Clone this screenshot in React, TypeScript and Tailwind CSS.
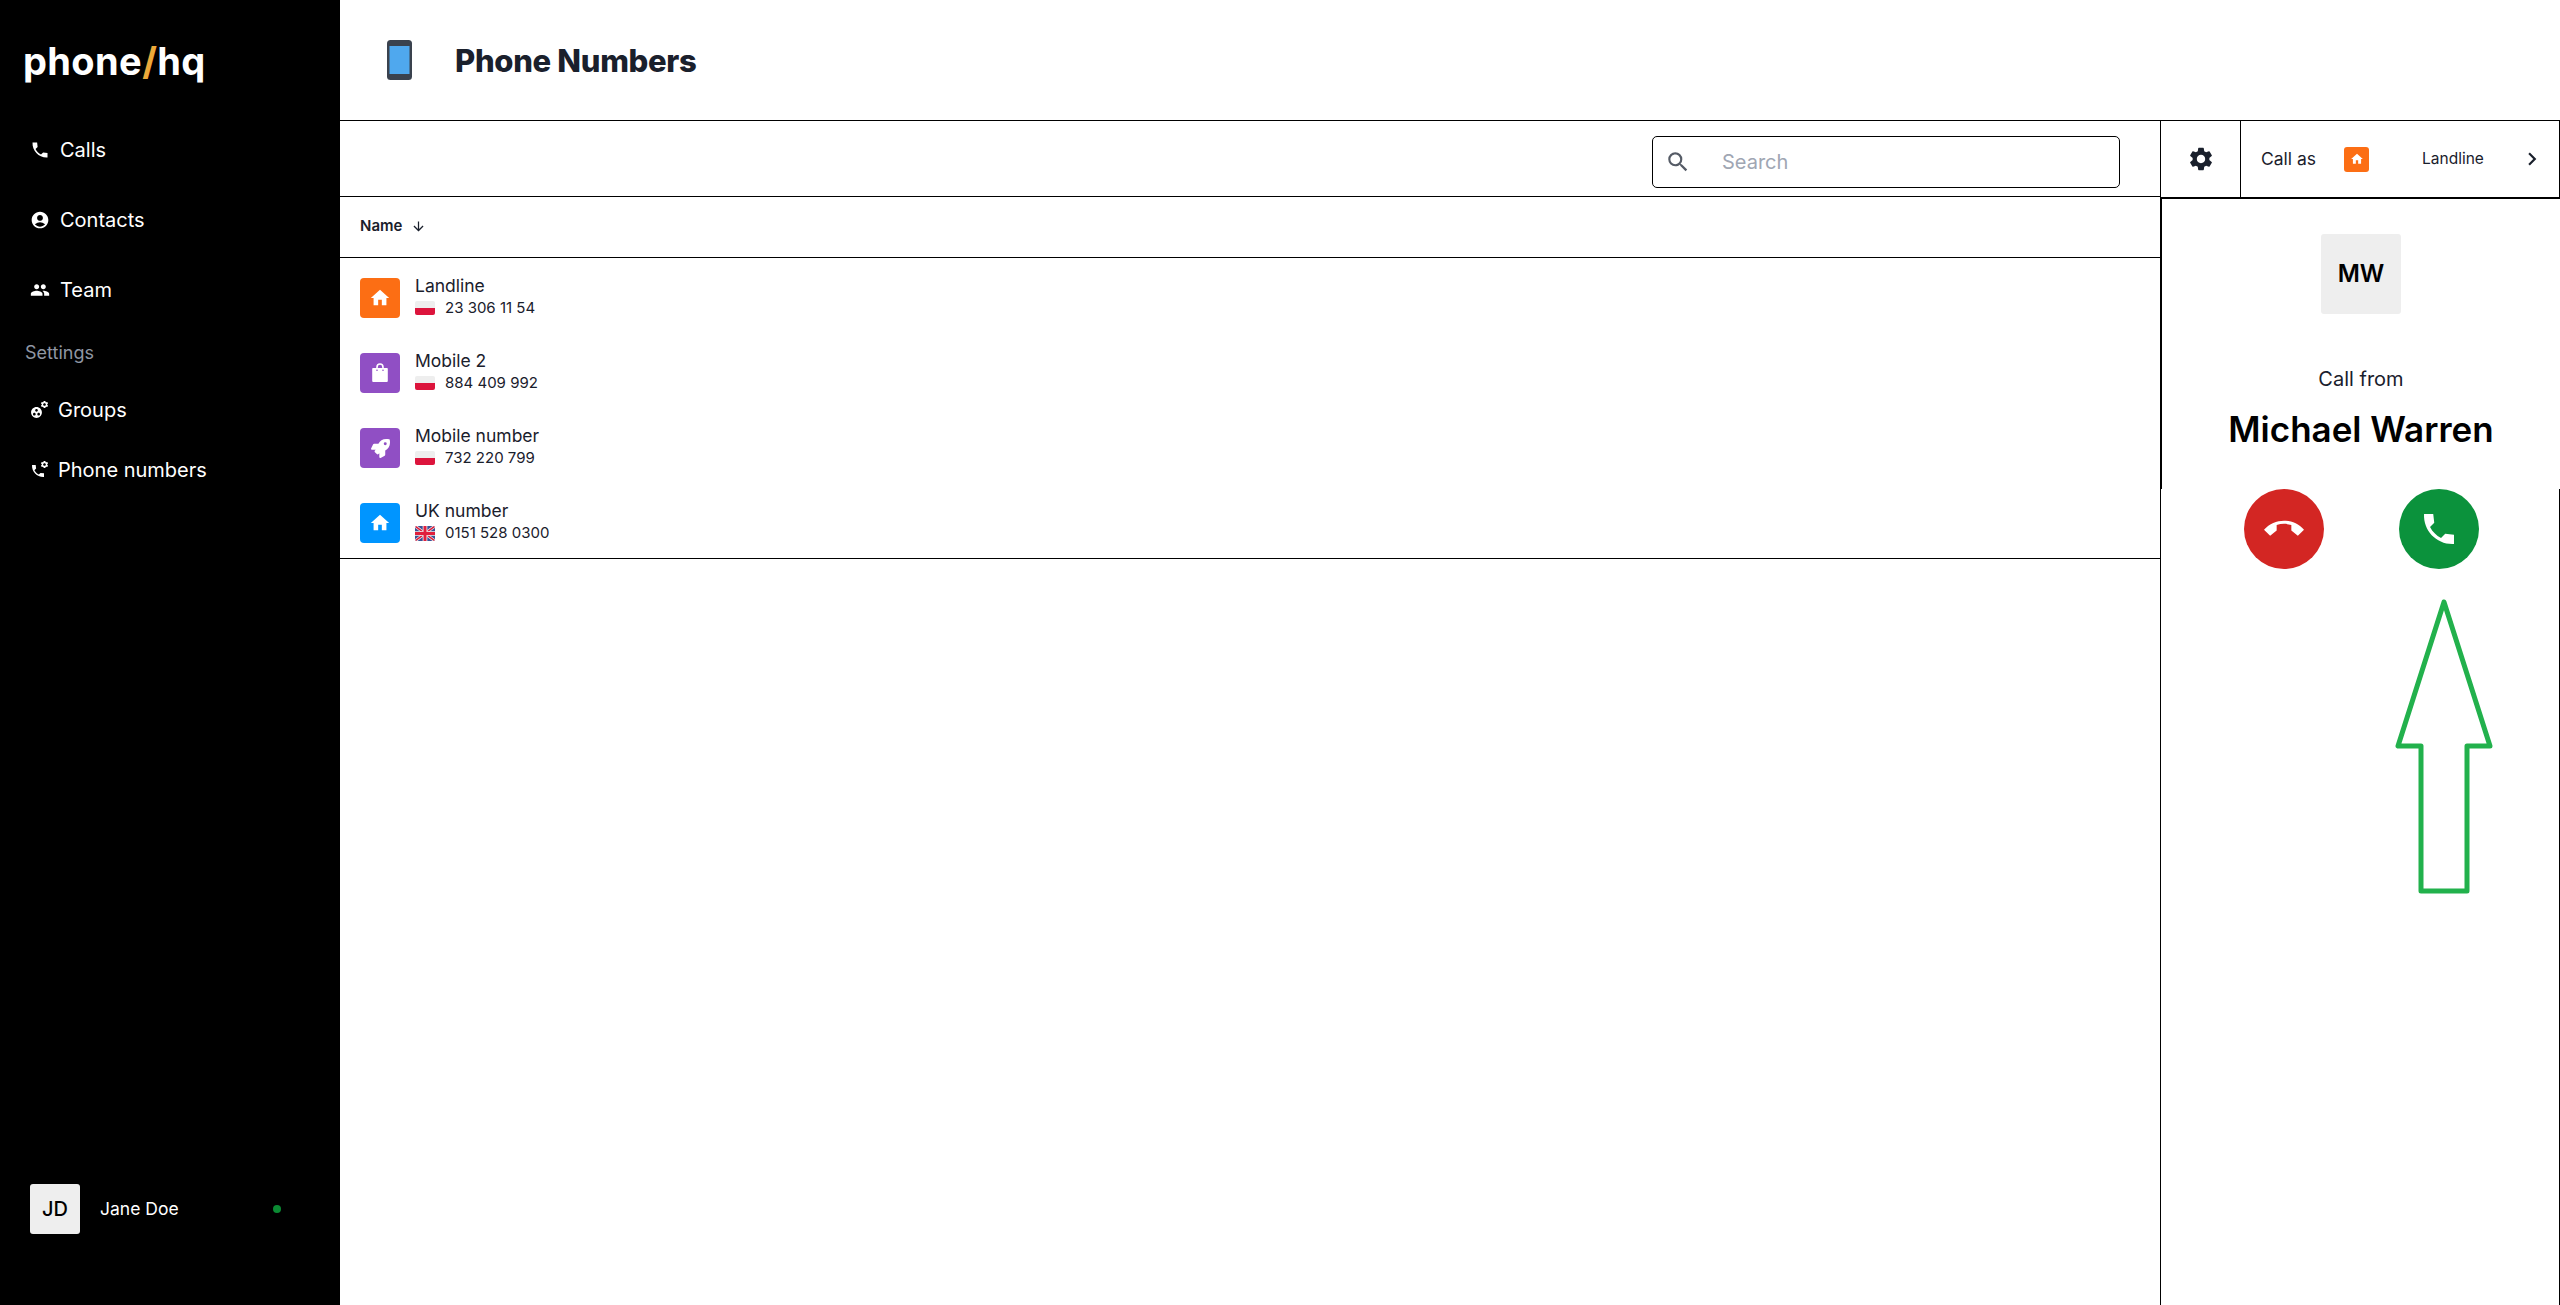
import React from "react";
import { MdAccountCircle, MdPeople, MdHome, MdSettings, MdSearch, MdChevronRight, MdArrowDownward } from "react-icons/md";
import { FaRocket } from "react-icons/fa";

const CALL = "M21 15.46l-5.27-.61-2.52 2.52c-2.83-1.44-5.15-3.75-6.59-6.59l2.53-2.53L8.54 3H3.03C2.45 13.18 10.82 21.55 21 20.97v-5.51z";
const CALL_END = "M3.68 16.07l3.92-3.11V9.59c2.85-.93 5.94-.93 8.8 0v3.38l3.91 3.1L24 12.39c-6.41-7.19-17.59-7.19-24 0l3.68 3.68z";
const GEAR = "M19.14 12.94c.04-.3.06-.61.06-.94 0-.32-.02-.64-.07-.94l2.03-1.58c.18-.14.23-.41.12-.61l-1.92-3.32c-.12-.22-.37-.29-.59-.22l-2.39.96c-.5-.38-1.03-.7-1.62-.94l-.36-2.54c-.04-.24-.24-.41-.48-.41h-3.84c-.24 0-.43.17-.47.41l-.36 2.54c-.59.24-1.13.57-1.62.94l-2.39-.96c-.22-.08-.47 0-.59.22L2.74 8.87c-.12.21-.08.47.12.61l2.03 1.58c-.05.3-.09.63-.09.94s.02.64.07.94l-2.03 1.58c-.18.14-.23.41-.12.61l1.92 3.32c.12.22.37.29.59.22l2.39-.96c.5.38 1.03.7 1.62.94l.36 2.54c.05.24.24.41.48.41h3.84c.24 0 .44-.17.47-.41l.36-2.54c.59-.24 1.13-.56 1.62-.94l2.39.96c.22.08.47 0 .59-.22l1.92-3.32c.12-.22.07-.47-.12-.61l-2.01-1.58zM12 15.6c-1.98 0-3.6-1.62-3.6-3.6s1.62-3.6 3.6-3.6 3.6 1.62 3.6 3.6-1.62 3.6-3.6 3.6z";
const WORK = "M12 2C6.48 2 2 6.48 2 12s4.48 10 10 10 10-4.48 10-10S17.52 2 12 2zM8 17.5c-1.38 0-2.5-1.12-2.5-2.5s1.12-2.5 2.5-2.5 2.5 1.12 2.5 2.5-1.12 2.5-2.5 2.5zM9.5 8c0-1.38 1.12-2.5 2.5-2.5s2.5 1.12 2.5 2.5-1.12 2.5-2.5 2.5S9.5 9.38 9.5 8zm6.5 9.5c-1.38 0-2.5-1.12-2.5-2.5s1.12-2.5 2.5-2.5 2.5 1.12 2.5 2.5-1.12 2.5-2.5 2.5z";

function Svg({ d, size, className }: { d: string; size: number; className?: string }) {
  return (
    <svg width={size} height={size} viewBox="0 0 24 24" fill="currentColor" className={className}>
      <path d={d} />
    </svg>
  );
}

function GroupsIcon() {
  return (
    <svg width="20" height="20" viewBox="0 0 20 20" fill="currentColor">
      <svg x="0" y="6" width="13" height="13" viewBox="0 0 24 24"><path d={WORK} /></svg>
      <svg x="10" y="0" width="9" height="9" viewBox="0 0 24 24"><path d={GEAR} /></svg>
    </svg>
  );
}

function PhoneGearIcon() {
  return (
    <svg width="20" height="20" viewBox="0 0 20 20" fill="currentColor">
      <svg x="0" y="3" width="16" height="16" viewBox="0 0 24 24"><path d={CALL} /></svg>
      <svg x="10" y="0" width="9" height="9" viewBox="0 0 24 24"><path d={GEAR} /></svg>
    </svg>
  );
}

function BagIcon() {
  return (
    <svg width="16" height="20" viewBox="0 0 16 20" fill="none">
      <path d="M5 6V4.2C5 2.4 6.3 1 8 1s3 1.4 3 3.2V6" stroke="#ffffff" strokeWidth="1.6" />
      <path d="M1 5h14a.8.8 0 0 1 .8.8V18a1 1 0 0 1-1 1H1.2a1 1 0 0 1-1-1V5.8A.8.8 0 0 1 1 5z" fill="#ffffff" />
      <circle cx="5" cy="7.2" r=".8" fill="#904fc4" />
      <circle cx="11" cy="7.2" r=".8" fill="#904fc4" />
    </svg>
  );
}

function PolandFlag() {
  return (
    <div className="flex h-[14px] w-5 flex-col overflow-hidden rounded-[2px]">
      <div className="flex-1 bg-[#eeeeee]" />
      <div className="flex-1 bg-[#dc143c]" />
    </div>
  );
}

function UkFlag() {
  return (
    <svg width="20" height="15" viewBox="0 0 60 45" className="rounded-[2px]">
      <rect width="60" height="45" fill="#3a4f95" />
      <path d="M0 0L60 45M60 0L0 45" stroke="#eeeeee" strokeWidth="9" />
      <path d="M0 0L60 45M60 0L0 45" stroke="#e01f3d" strokeWidth="4.5" />
      <path d="M30 0V45M0 22.5H60" stroke="#eeeeee" strokeWidth="14" />
      <path d="M30 0V45M0 22.5H60" stroke="#e01f3d" strokeWidth="9" />
    </svg>
  );
}

function NavItem({ icon, label, gap, height }: { icon: React.ReactNode; label: string; gap: string; height: string }) {
  return (
    <div className={`flex items-center pl-[30px] text-[20px] text-white ${gap} ${height}`}>
      <span className="flex h-5 w-5 items-center justify-center">{icon}</span>
      <span>{label}</span>
    </div>
  );
}

function NumberRow({ color, icon, name, number, flag }: { color: string; icon: React.ReactNode; name: string; number: string; flag: React.ReactNode }) {
  return (
    <div className="flex h-10 items-center gap-[15px]">
      <div className={`flex h-10 w-10 items-center justify-center rounded-[4px] text-white ${color}`}>{icon}</div>
      <div className="flex flex-col pb-[2px]">
        <div className="h-[22px] text-[17.5px] leading-[22px] text-[#1a202c]">{name}</div>
        <div className="flex h-[22px] items-center gap-[10px] text-[15px] leading-[22px] text-[#1a202c]">
          {flag}
          <span>{number}</span>
        </div>
      </div>
    </div>
  );
}

export default function App() {
  return (
    <div className="relative flex h-screen w-full overflow-hidden bg-white font-[Inter,sans-serif]">
      <aside className="flex w-[340px] shrink-0 flex-col bg-black">
        <div className="flex h-[125px] items-center pb-1 pl-[23px] text-[38px] font-bold leading-none tracking-[0.01em] text-white">
          phone<span className="text-[#eca93a]">/</span>hq
        </div>
        <NavItem icon={<Svg d={CALL} size={20} />} label="Calls" gap="gap-[10px]" height="h-[50px]" />
        <div className="h-5" />
        <NavItem icon={<MdAccountCircle size={20} />} label="Contacts" gap="gap-[10px]" height="h-[50px]" />
        <div className="h-5" />
        <NavItem icon={<MdPeople size={22} />} label="Team" gap="gap-[10px]" height="h-[50px]" />
        <div className="flex h-[51px] items-end pl-[25px] text-[18px] leading-[27px] text-[#8f96a3]">Settings</div>
        <div className="h-[14px]" />
        <NavItem icon={<GroupsIcon />} label="Groups" gap="gap-2" height="h-[60px]" />
        <NavItem icon={<PhoneGearIcon />} label="Phone numbers" gap="gap-2" height="h-[60px]" />
        <div className="mt-auto mb-[71px] flex items-center pl-[30px]">
          <div className="flex h-[50px] w-[50px] items-center justify-center rounded-[3px] bg-[#eeeeee] text-[20px] font-medium text-black">JD</div>
          <div className="ml-5 w-[173px] text-[17.5px] text-white">Jane Doe</div>
          <div className="h-2 w-2 rounded-full bg-[#0b8a33]" />
        </div>
      </aside>

      <main className="flex min-w-0 flex-1 flex-col">
        <header className="flex h-[121px] shrink-0 items-center border-b border-black pl-[47px]">
          <svg width="26" height="40" viewBox="0 0 26 40">
            <rect width="25" height="40" rx="3.5" fill="#3a424e" />
            <rect x="2.5" y="6" width="20" height="28" fill="#4fa8ee" />
          </svg>
          <h1 className="ml-[42px] text-[31px] font-extrabold leading-none tracking-[-0.01em] text-[#1a202c]">Phone Numbers</h1>
        </header>

        <div className="flex min-h-0 flex-1">
          <section className="flex min-w-0 flex-1 flex-col">
            <div className="flex h-[76px] shrink-0 items-start justify-end border-b border-black pt-[15px] pr-10">
              <div className="flex h-[52px] w-[468px] items-center rounded-[5px] border border-black pl-3">
                <MdSearch size={26} className="text-[#555b66]" />
                <input placeholder="Search" className="ml-[31px] min-w-0 flex-1 bg-transparent text-[20px] outline-none placeholder:text-[#a0a6b3]" />
              </div>
            </div>
            <div className="flex h-[61px] shrink-0 items-center gap-[9px] border-b border-black pb-[2px] pl-[20px] text-[15px] font-semibold text-[#1a202c]">
              Name
              <MdArrowDownward size={15} />
            </div>
            <div className="flex shrink-0 flex-col gap-[35px] border-b border-black pt-5 pb-[15px] pl-[20px]">
              <NumberRow color="bg-[#fc6e14]" icon={<MdHome size={22} />} name="Landline" number="23 306 11 54" flag={<PolandFlag />} />
              <NumberRow color="bg-[#904fc4]" icon={<BagIcon />} name="Mobile 2" number="884 409 992" flag={<PolandFlag />} />
              <NumberRow color="bg-[#904fc4]" icon={<FaRocket size={19} />} name="Mobile number" number="732 220 799" flag={<PolandFlag />} />
              <NumberRow color="bg-[#0095ff]" icon={<MdHome size={22} />} name="UK number" number="0151 528 0300" flag={<UkFlag />} />
            </div>
          </section>

          <section className="flex w-[400px] shrink-0 flex-col">
            <div className="flex h-[78px] shrink-0 items-center border-r border-b-2 border-l border-black">
              <div className="flex h-full w-[80px] items-center justify-center border-r border-black text-[#1a202c]">
                <MdSettings size={28} />
              </div>
              <span className="ml-5 text-[17.5px] text-[#1a202c]">Call as</span>
              <div className="ml-7 flex h-[25px] w-[25px] items-center justify-center rounded-[3px] bg-[#fc6e14] text-white">
                <MdHome size={14} />
              </div>
              <span className="ml-[53px] text-[15.5px] text-[#1a202c]">Landline</span>
              <MdChevronRight size={26} className="ml-[35px] text-[#1a202c]" />
            </div>
            <div className="flex h-[290px] shrink-0 flex-col items-center border-l-2 border-black pt-[35px]">
              <div className="flex h-20 w-20 items-center justify-center rounded-[3px] bg-[#eeeeee] text-[24px] font-semibold text-black">MW</div>
              <div className="mt-[50px] text-[20px] leading-[30px] text-[#1a202c]">Call from</div>
              <div className="mt-[13px] text-[35px] font-semibold leading-[44px] text-black">Michael Warren</div>
            </div>
            <div className="flex flex-1 justify-center gap-[75px] border-x border-black pl-[3px]">
              <button className="flex h-20 w-20 items-center justify-center rounded-full bg-[#d32623] text-white">
                <Svg d={CALL_END} size={40} />
              </button>
              <button className="flex h-20 w-20 items-center justify-center rounded-full bg-[#0b923c] text-white">
                <Svg d={CALL} size={40} />
              </button>
            </div>
          </section>
        </div>
      </main>

      <svg className="absolute left-[2390px] top-[590px]" width="110" height="310" viewBox="2390 590 110 310" fill="none">
        <path d="M2444 602L2398 746H2421V891H2467V746H2490Z" stroke="#22b14c" strokeWidth="5" strokeLinejoin="round" />
      </svg>
    </div>
  );
}
